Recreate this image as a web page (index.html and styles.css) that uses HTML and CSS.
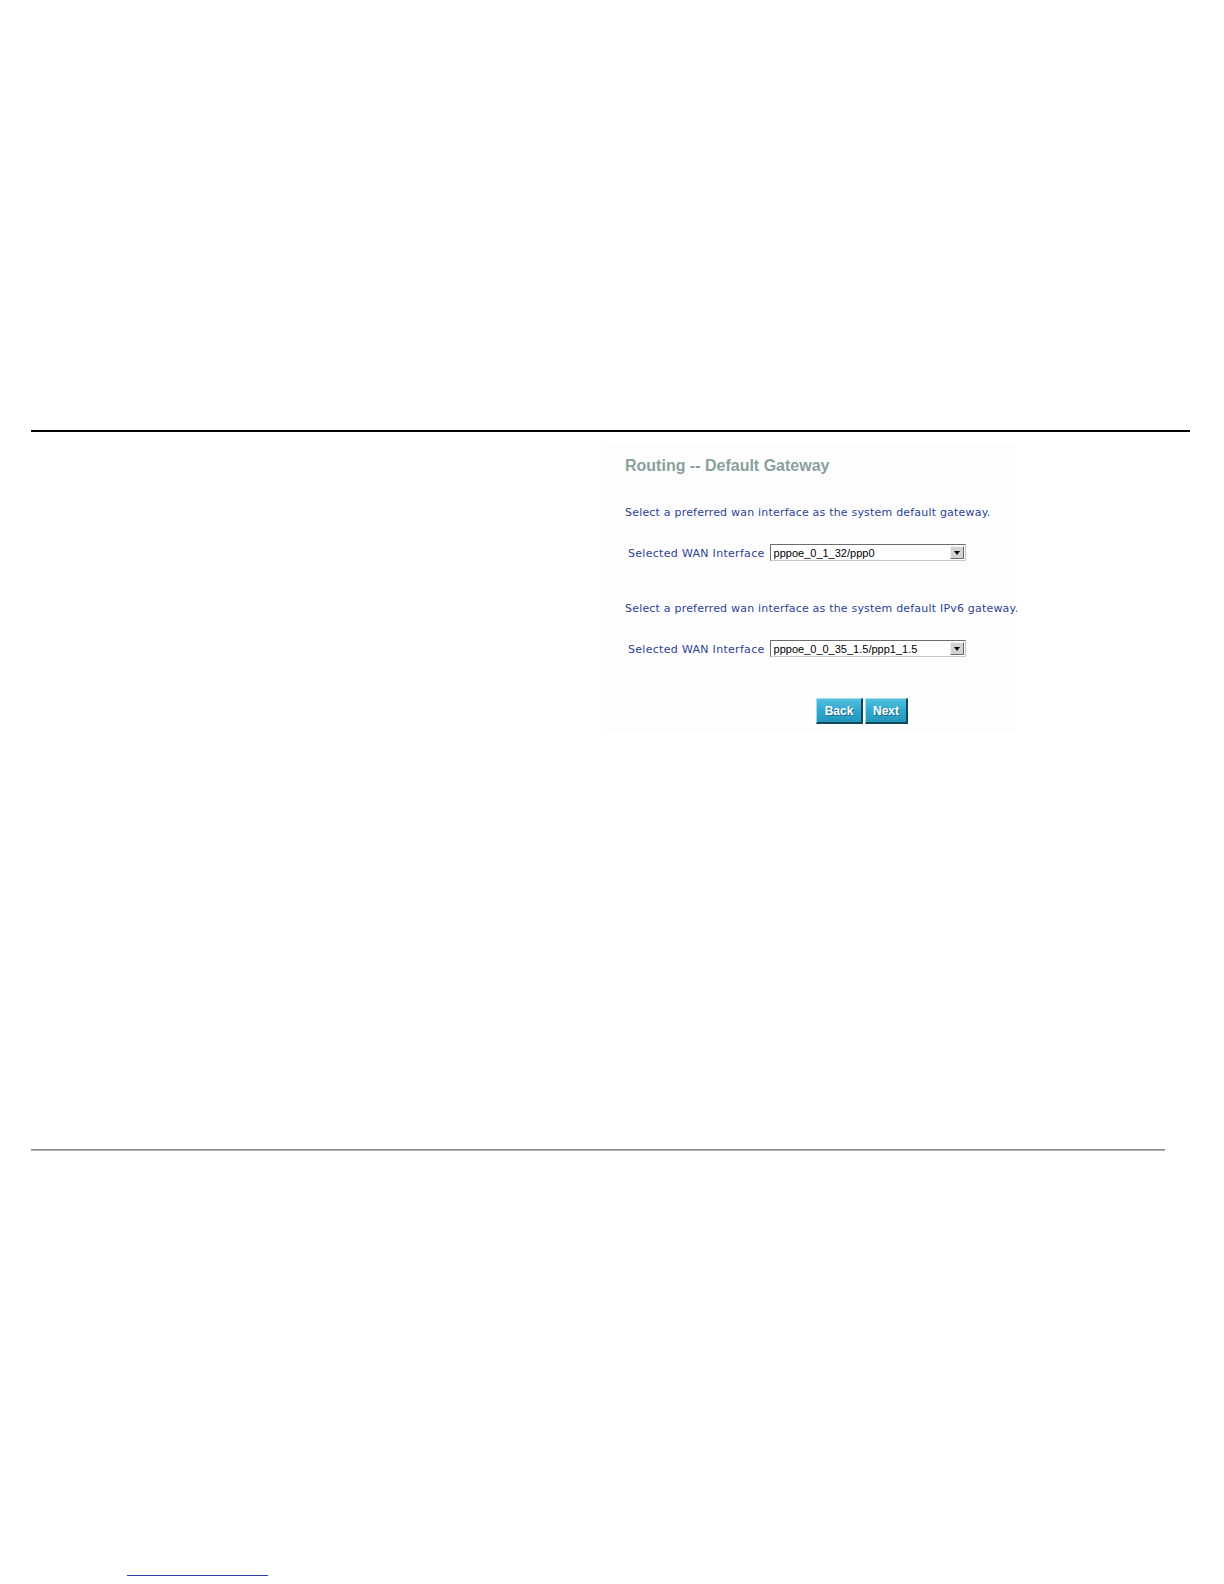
FILE: index.html
```html
<!DOCTYPE html>
<html>
<head>
<meta charset="utf-8">
<title>Routing -- Default Gateway</title>
<link rel="stylesheet" href="styles.css">
</head>
<body>
<div class="page">
  <div class="rule-top"></div>
  <div class="shot">
    <h1 class="title">Routing -- Default Gateway</h1>
    <p class="desc desc-first">Select a preferred wan interface as the system default gateway.</p>
    <div class="row">
      <span class="label">Selected WAN Interface</span>
      <div class="select">
        <span class="select-value">pppoe_0_1_32/ppp0</span>
        <span class="select-btn"><span class="arrow"></span></span>
      </div>
    </div>
    <p class="desc desc-second">Select a preferred wan interface as the system default IPv6 gateway.</p>
    <div class="row">
      <span class="label">Selected WAN Interface</span>
      <div class="select">
        <span class="select-value">pppoe_0_0_35_1.5/ppp1_1.5</span>
        <span class="select-btn"><span class="arrow"></span></span>
      </div>
    </div>
    <div class="buttons">
      <span class="btn btn-back">Back</span>
      <span class="btn btn-next">Next</span>
    </div>
  </div>
  <div class="rule-bottom"></div>
  <div class="link-line"></div>
</div>
</body>
</html>
```

FILE: styles.css
```css
html, body {
  margin: 0;
  padding: 0;
  background: #ffffff;
}

.page {
  width: 1224px;
  height: 1584px;
  padding-top: 430px;
  box-sizing: border-box;
  font-family: "DejaVu Sans", Verdana, sans-serif;
}

.rule-top {
  height: 2px;
  margin: 0 34px 0 31px;
  background: #000000;
}

.shot {
  margin-left: 606px;
  width: 410px;
  height: 289px;
  margin-top: 11px;
  padding-top: 13px;
  box-sizing: border-box;
  background: #fdfdfd;
}

.title {
  margin: 0 0 0 19px;
  font-family: "Liberation Sans", Arial, sans-serif;
  font-weight: bold;
  font-size: 16px;
  line-height: 19px;
  color: #8c9f9f;
  white-space: nowrap;
}

.desc {
  margin: 0 0 0 19px;
  font-size: 11px;
  line-height: 15px;
  color: #2d4296;
  letter-spacing: 0.2px;
  white-space: nowrap;
}

.desc-first {
  margin-top: 30px;
}

.desc-second {
  margin-top: 40px;
}

.row {
  display: flex;
  align-items: center;
  margin: 24px 0 0 22px;
  height: 17px;
}

.label {
  font-size: 11px;
  line-height: 15px;
  color: #2d4296;
  letter-spacing: 0.3px;
  margin-right: 5px;
  padding-top: 2px;
  white-space: nowrap;
}

.select {
  display: flex;
  align-items: center;
  width: 196px;
  height: 17px;
  box-sizing: border-box;
  background: #ffffff;
  border-top: 1px solid #6c6c6c;
  border-left: 1px solid #6c6c6c;
  border-right: 1px solid #c8c8c8;
  border-bottom: 1px solid #c8c8c8;
}

.select-value {
  flex: 1;
  padding-left: 3px;
  font-family: "Liberation Sans", Arial, sans-serif;
  font-size: 11px;
  line-height: 14px;
  color: #000000;
  white-space: nowrap;
}

.select-btn {
  display: flex;
  align-items: center;
  justify-content: center;
  width: 14px;
  height: 13px;
  margin-right: 1px;
  background: #d6d3ce;
  border-top: 1px solid #f4f4f4;
  border-left: 1px solid #f4f4f4;
  border-right: 1px solid #6a6a6a;
  border-bottom: 1px solid #6a6a6a;
  box-sizing: border-box;
}

.arrow {
  width: 0;
  height: 0;
  border-left: 3px solid transparent;
  border-right: 3px solid transparent;
  border-top: 4px solid #000000;
  margin-top: 1px;
}

.buttons {
  display: flex;
  gap: 2px;
  margin: 41px 0 0 210px;
}

.btn {
  display: flex;
  align-items: center;
  justify-content: center;
  height: 26px;
  box-sizing: border-box;
  font-family: "Liberation Sans", Arial, sans-serif;
  font-weight: bold;
  font-size: 12px;
  color: #ffffff;
  text-shadow: 1px 1px 0 #1d6e86;
  background: linear-gradient(#52c0e0, #30a6cc 55%, #2596bd);
  border-top: 1px solid #9ee0f2;
  border-left: 1px solid #9ee0f2;
  border-right: 2px solid #0e4a5c;
  border-bottom: 2px solid #0e4a5c;
}

.btn-back {
  width: 47px;
}

.btn-next {
  width: 43px;
}

.rule-bottom {
  height: 1px;
  margin: 417px 0 0 31px;
  width: 1134px;
  background: #8c8c8c;
  border-bottom: 1px solid #b4b4b4;
}

.link-line {
  height: 1px;
  width: 141px;
  margin: 424px 0 0 127px;
  background: #2a3fb0;
}
```
